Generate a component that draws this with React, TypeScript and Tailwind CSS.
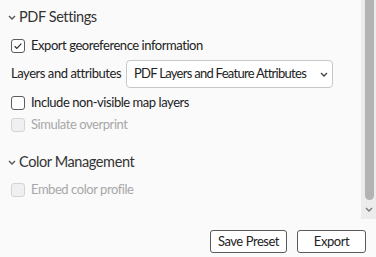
import * as React from 'react';

const font = { fontFamily: 'Lato, "Noto Sans", sans-serif' };

function Chevron({ className = '' }: { className?: string }) {
  return (
    <svg viewBox="0 0 8 5" className={className} fill="none">
      <path d="M1 1l3 3 3-3" stroke="currentColor" strokeWidth="1.4" />
    </svg>
  );
}

function Check({ checked = false, disabled = false, label }: { checked?: boolean; disabled?: boolean; label: string }) {
  return (
    <div className="flex h-[20px] items-center pl-[11px]">
      <span
        className={
          'flex h-[14px] w-[14px] shrink-0 items-center justify-center rounded-[3px] border ' +
          (disabled ? 'border-[#d4d4d4] bg-[#f0f0f0]' : 'border-[#5c5c5c] bg-white')
        }
      >
        {checked && (
          <svg viewBox="0 0 12 12" className="h-[10px] w-[10px]" fill="none">
            <path d="M2 6.3l2.6 2.6L10 3.2" stroke="#333" strokeWidth="1.5" />
          </svg>
        )}
      </span>
      <span
        className={
          'ml-[6px] whitespace-nowrap text-[13px] tracking-[-0.45px] ' +
          (disabled ? 'text-[#a8a8a8]' : 'text-[#222]')
        }
      >
        {label}
      </span>
    </div>
  );
}

function SectionHeader({ title }: { title: string }) {
  return (
    <div className="flex h-[22px] items-center pl-[8px]">
      <Chevron className="h-[5px] w-[8px] text-[#555]" />
      <span className="ml-[3px] whitespace-nowrap text-[14.5px] tracking-[-0.4px] text-[#333]">{title}</span>
    </div>
  );
}

export default function App() {
  return (
    <div className="flex h-[257px] w-[376px] flex-col bg-[#fafafa]" style={font}>
      <div className="flex h-[219px]">
        <div className="flex flex-1 flex-col">
          <div className="mt-[6px]">
            <SectionHeader title="PDF Settings" />
          </div>
          <div className="mt-[8px]">
            <Check checked label="Export georeference information" />
          </div>
          <div className="mt-[4px] flex h-[28px] items-center pl-[11px]">
            <span className="w-[115px] shrink-0 whitespace-nowrap text-[13px] tracking-[-0.45px] text-[#222]">
              Layers and attributes
            </span>
            <div className="flex h-[28px] w-[207px] shrink-0 items-center justify-between overflow-hidden rounded-[4px] border border-[#c8c8c8] bg-white pl-[7px] pr-[4px]">
              <span className="whitespace-nowrap text-[13px] tracking-[-0.72px] text-[#222]">
                PDF Layers and Feature Attributes
              </span>
              <Chevron className="h-[5px] w-[8px] shrink-0 text-[#444]" />
            </div>
          </div>
          <div className="mt-[5px]">
            <Check label="Include non-visible map layers" />
          </div>
          <div className="mt-[2px]">
            <Check disabled label="Simulate overprint" />
          </div>
          <div className="mt-[16px]">
            <SectionHeader title="Color Management" />
          </div>
          <div className="mt-[7px]">
            <Check disabled label="Embed color profile" />
          </div>
        </div>
        <div className="flex w-[15px] flex-col items-center bg-[#ececec] pl-[1px]">
          <div className="h-[200px] w-[9px] rounded-b-[5px] bg-[#b3b3b3]" />
          <Chevron className="mt-[7px] h-[5px] w-[8px] text-[#777]" />
        </div>
      </div>
      <div className="flex justify-end gap-[10px] pr-[10px] pt-[11px]">
        <button className="h-[23px] w-[77px] whitespace-nowrap rounded-[3px] border border-[#5a5a5a] bg-white text-[13px] tracking-[-0.45px] text-[#222]">
          Save Preset
        </button>
        <button className="h-[23px] w-[69px] rounded-[3px] border border-[#5a5a5a] bg-white text-[13px] tracking-[-0.45px] text-[#222]">
          Export
        </button>
      </div>
    </div>
  );
}
